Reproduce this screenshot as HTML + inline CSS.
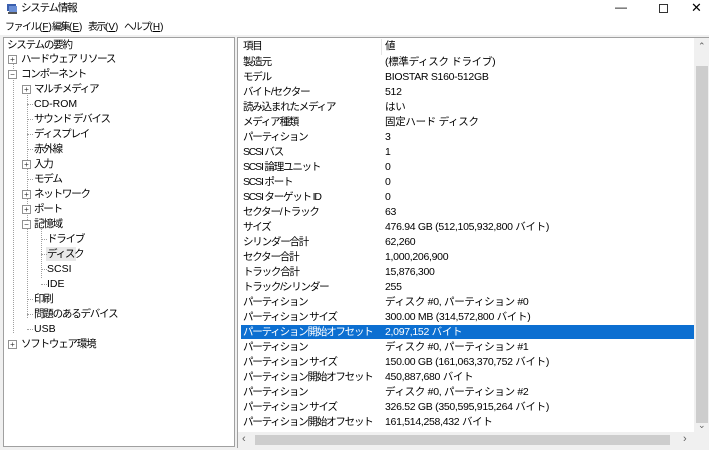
<!DOCTYPE html>
<html><head><meta charset="utf-8"><style>
*{margin:0;padding:0;box-sizing:border-box}
body{width:709px;height:450px;background:#f0f0f0;font-family:"Liberation Sans","Noto Sans CJK JP",sans-serif;font-size:10.5px;color:#000;position:relative;overflow:hidden}
.a{position:absolute;white-space:nowrap;line-height:15px}
.j{letter-spacing:-1.2px}
.m{font-size:10px}
.m b{font-weight:normal;letter-spacing:-1.5px}
.m i{font-style:normal;letter-spacing:0}
#title{position:absolute;left:0;top:0;width:709px;height:18px;background:#fff}
#menu{position:absolute;left:0;top:18px;width:709px;height:17px;background:#fff}
#left{position:absolute;left:3px;top:37px;width:232px;height:410px;background:#fff;border:1px solid #a0a0a0}
#right{position:absolute;left:237px;top:37px;width:472px;height:411px;background:#fff;border:1px solid #a0a0a0;border-right:none}
.box{position:absolute;width:9px;height:9px;border:1px solid #919191;background:#fff;font-size:8px;line-height:7px;text-align:center;color:#333}
.vl{position:absolute;border-left:1px dotted #a0a0a0}
.hl{position:absolute;border-top:1px dotted #a0a0a0;width:6px}
</style></head><body>
<div id="title">
<svg style="position:absolute;left:6px;top:3px" width="12" height="12"><rect x="1" y="1" width="9" height="7" fill="#3a5fae"/><rect x="3" y="3" width="8" height="7" fill="#6b8fd6"/><rect x="2" y="9" width="9" height="2" fill="#555"/></svg>
<div class="a j" style="left:21px;top:1px">システム情報</div>
<div class="a" style="left:615px;top:0px;font-size:12px">—</div>
<div style="position:absolute;left:659px;top:4px;width:9px;height:9px;border:1px solid #333"></div>
<div class="a" style="left:691px;top:0px;font-size:13px">✕</div>
</div>
<div id="menu">
<div class="a m" style="left:5px;top:2px"><b>ファイル</b><i>(<u>F</u>)</i></div>
<div class="a m" style="left:52px;top:2px"><b>編集</b><i>(<u>E</u>)</i></div>
<div class="a m" style="left:88px;top:2px"><b>表示</b><i>(<u>V</u>)</i></div>
<div class="a m" style="left:124px;top:2px"><b>ヘルプ</b><i>(<u>H</u>)</i></div>
</div>
<div id="left">
<div class="vl" style="left:9px;top:25px;height:270px"></div>
<div class="vl" style="left:23px;top:53px;height:227px"></div>
<div class="vl" style="left:37px;top:180px;height:60px"></div>
</div>
<div class="a j" style="left:7px;top:38px">システムの要約</div>
<div class="box" style="left:8px;top:55px">+</div><div class="a j" style="left:21px;top:52px">ハードウェア リソース</div>
<div class="box" style="left:8px;top:70px">−</div><div class="a j" style="left:21px;top:67px">コンポーネント</div>
<div class="box" style="left:22px;top:85px">+</div><div class="a j" style="left:34px;top:82px">マルチメディア</div>
<div class="hl" style="left:27px;top:104px"></div><div class="a" style="left:34px;top:97px">CD-ROM</div>
<div class="hl" style="left:27px;top:119px"></div><div class="a j" style="left:34px;top:112px">サウンド デバイス</div>
<div class="hl" style="left:27px;top:134px"></div><div class="a j" style="left:34px;top:127px">ディスプレイ</div>
<div class="hl" style="left:27px;top:149px"></div><div class="a j" style="left:34px;top:142px">赤外線</div>
<div class="box" style="left:22px;top:160px">+</div><div class="a j" style="left:34px;top:157px">入力</div>
<div class="hl" style="left:27px;top:179px"></div><div class="a j" style="left:34px;top:172px">モデム</div>
<div class="box" style="left:22px;top:190px">+</div><div class="a j" style="left:34px;top:187px">ネットワーク</div>
<div class="box" style="left:22px;top:205px">+</div><div class="a j" style="left:34px;top:202px">ポート</div>
<div class="box" style="left:22px;top:220px">−</div><div class="a j" style="left:34px;top:217px">記憶域</div>
<div class="hl" style="left:41px;top:239px"></div><div class="a j" style="left:47px;top:232px">ドライブ</div>
<div style="position:absolute;left:46px;top:247px;width:30px;height:14px;background:#e8e8e8"></div>
<div class="hl" style="left:41px;top:254px"></div><div class="a j" style="left:47px;top:247px">ディスク</div>
<div class="hl" style="left:41px;top:269px"></div><div class="a" style="left:47px;top:262px">SCSI</div>
<div class="hl" style="left:41px;top:284px"></div><div class="a" style="left:47px;top:277px">IDE</div>
<div class="hl" style="left:27px;top:299px"></div><div class="a j" style="left:34px;top:292px">印刷</div>
<div class="hl" style="left:27px;top:314px"></div><div class="a j" style="left:34px;top:307px">問題のあるデバイス</div>
<div class="hl" style="left:27px;top:329px"></div><div class="a" style="left:34px;top:322px">USB</div>
<div class="box" style="left:8px;top:340px">+</div><div class="a j" style="left:21px;top:337px">ソフトウェア環境</div>

<div id="right">
<div style="position:absolute;left:143px;top:1px;height:16px;border-left:1px solid #e5e5e5"></div>
<div style="position:absolute;left:3px;top:287px;width:455px;height:14px;background:#0c6fd1"></div>
<div style="position:absolute;left:456px;top:0;width:16px;height:394px;background:#f0f0f0"></div>
<div style="position:absolute;left:458px;top:28px;width:12px;height:357px;background:#cdcdcd"></div>
<div class="a" style="left:460px;top:1px;font-size:9px;color:#606060">⌃</div>
<div class="a" style="left:460px;top:380px;font-size:9px;color:#606060">⌄</div>
<div style="position:absolute;left:0;top:394px;width:472px;height:16px;background:#f0f0f0"></div>
<div style="position:absolute;left:17px;top:397px;width:415px;height:10px;background:#cdcdcd"></div>
<div class="a" style="left:4px;top:394px;font-size:11px;color:#606060">‹</div>
<div class="a" style="left:445px;top:394px;font-size:11px;color:#606060">›</div>
</div>
<div class="a j" style="left:243px;top:39px">項目</div><div class="a j" style="left:385px;top:39px">値</div>
<div style="position:absolute;left:243px;top:55px;line-height:15px;width:140px" class="j">
製造元<br>モデル<br>バイト/セクター<br>読み込まれたメディア<br>メディア種類<br>パーティション<br>SCSI バス<br>SCSI 論理ユニット<br>SCSI ポート<br>SCSI ターゲット ID<br>セクター/トラック<br>サイズ<br>シリンダー合計<br>セクター合計<br>トラック合計<br>トラック/シリンダー<br>パーティション<br>パーティション サイズ<br><span style="color:#fff">パーティション開始オフセット</span><br>パーティション<br>パーティション サイズ<br>パーティション開始オフセット<br>パーティション<br>パーティション サイズ<br>パーティション開始オフセット
</div>
<div style="position:absolute;left:385px;top:55px;line-height:15px;width:300px;white-space:nowrap;letter-spacing:-0.3px">
(標準ディスク ドライブ)<br>BIOSTAR S160-512GB<br>512<br>はい<br>固定ハード ディスク<br>3<br>1<br>0<br>0<br>0<br>63<br>476.94 GB (512,105,932,800 バイト)<br>62,260<br>1,000,206,900<br>15,876,300<br>255<br>ディスク #0, パーティション #0<br>300.00 MB (314,572,800 バイト)<br><span style="color:#fff">2,097,152 バイト</span><br>ディスク #0, パーティション #1<br>150.00 GB (161,063,370,752 バイト)<br>450,887,680 バイト<br>ディスク #0, パーティション #2<br>326.52 GB (350,595,915,264 バイト)<br>161,514,258,432 バイト
</div>
</body></html>
